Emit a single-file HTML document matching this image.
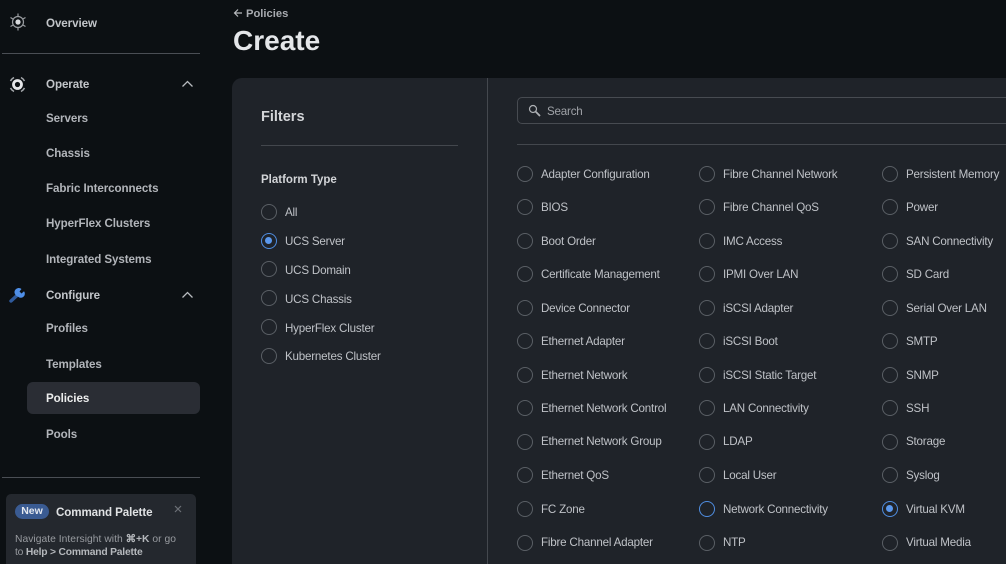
<!DOCTYPE html>
<html lang="en">
<head>
<meta charset="utf-8">
<title>Create Policy</title>
<style>
*{box-sizing:border-box}
html,body{margin:0;padding:0;width:1006px;height:564px;overflow:hidden;background:#0c1013}
#w{position:relative;width:1006px;height:564px;overflow:hidden;background:#0c1013;font-family:"Liberation Sans",sans-serif;color:#c8cbd0}
.t{position:absolute;margin-top:1px;white-space:nowrap;line-height:16px;font-size:11.6px;letter-spacing:-.2px;color:#bfc2c7}
.n{font-weight:700;color:#b2b5ba;font-size:11.6px;letter-spacing:-.08px}
.n.h{color:#c2c5c9}
.r{position:absolute;width:16px;height:16px;border-radius:50%;border:1.5px solid #5a5f65}
.r.on{border-color:#4f8de0}
.r.c:after{content:"";position:absolute;left:3px;top:3px;width:7px;height:7px;border-radius:50%;background:#5b98ec}
.l{position:absolute;height:1px;background:#43474d}
svg{position:absolute}
</style>
</head>
<body>
<div id="w">
<!-- sidebar -->
<svg style="left:8px;top:12px" width="20" height="20" viewBox="0 0 20 20" fill="none" stroke="#9a9da1" stroke-width="1.200"><circle cx="10" cy="10" r="5.500"/><circle cx="10" cy="10" r="2.600" fill="#d8dadd" stroke="none"/><path d="M10 1.500v3M10 15.500v3M2.500 5.500l2.600 1.600M14.900 13l2.600 1.500M2.500 14.500l2.600-1.500M14.900 7l2.600-1.500"/></svg>
<div class="t n" style="left:46px;top:15px;color:#c2c5c9">Overview</div>
<div class="l" style="left:2px;top:53px;width:198px;background:#4a4e54"></div>

<svg style="left:7px;top:74px" width="21" height="21" viewBox="0 0 21 21" fill="none" stroke="#a5a8ac" stroke-width="1.500"><circle cx="10.500" cy="10.500" r="4" stroke="#e6e7e9" stroke-width="2.800"/><path d="M3.500 7A8 8 0 0 1 7 3.500M14 3.500A8 8 0 0 1 17.500 7M17.500 14A8 8 0 0 1 14 17.500M7 17.500A8 8 0 0 1 3.500 14"/></svg>
<div class="t n h" style="left:46px;top:76px">Operate</div>
<svg style="left:181px;top:79px" width="13" height="10" viewBox="0 0 13 10" fill="none" stroke="#b8bbbf" stroke-width="1.300"><path d="M1.500 7.500L6.500 2.500L11.500 7.500"/></svg>
<div class="t n" style="left:46px;top:110px">Servers</div>
<div class="t n" style="left:46px;top:145px">Chassis</div>
<div class="t n" style="left:46px;top:180px">Fabric Interconnects</div>
<div class="t n" style="left:46px;top:215px">HyperFlex Clusters</div>
<div class="t n" style="left:46px;top:251px">Integrated Systems</div>

<svg style="left:9px;top:287px" width="17" height="16" viewBox="0 0 17 16" fill="none"><path d="M2 14L8 8.500" stroke="#2f5a9c" stroke-width="3.400" stroke-linecap="round"/><path d="M7 8.500A4 4 0 0 1 12.500 2L10.500 4.500L12.500 6.500L15 4.300A4 4 0 0 1 9.500 10Z" fill="#4f8fe8"/></svg>
<div class="t n h" style="left:46px;top:287px">Configure</div>
<svg style="left:181px;top:290px" width="13" height="10" viewBox="0 0 13 10" fill="none" stroke="#b8bbbf" stroke-width="1.300"><path d="M1.500 7.500L6.500 2.500L11.500 7.500"/></svg>
<div class="t n" style="left:46px;top:320px">Profiles</div>
<div class="t n" style="left:46px;top:356px">Templates</div>
<div style="position:absolute;left:27px;top:382px;width:173px;height:32px;background:#2a2d34;border-radius:6px"></div>
<div class="t n" style="left:46px;top:390px;color:#eceded">Policies</div>
<div class="t n" style="left:46px;top:426px">Pools</div>
<div class="l" style="left:2px;top:477px;width:198px;background:#4a4e54"></div>

<!-- command palette -->
<div style="position:absolute;left:6px;top:494px;width:190px;height:80px;background:#24282e;border-radius:5px"></div>
<div style="position:absolute;left:15px;top:504px;width:34px;height:15px;background:#3a5b92;border-radius:8px;color:#e4e8ef;font-size:10.500px;font-weight:700;line-height:15px;text-align:center">New</div>
<div class="t" style="left:56px;top:504px;font-size:11.600px;font-weight:700;color:#e0e2e4;letter-spacing:-.1px">Command Palette</div>
<svg style="left:174px;top:505px" width="8" height="8" viewBox="0 0 8 8" stroke="#6c7076" stroke-width="1.200"><path d="M1 1L7 7M7 1L1 7"/></svg>
<div class="t" style="left:15px;top:532px;font-size:10.300px;letter-spacing:.03px;color:#989ba0;line-height:14px">Navigate Intersight with <b style="color:#b5b8bc">⌘+K</b> or go</div>
<div class="t" style="left:15px;top:545px;font-size:10.300px;letter-spacing:-.2px;color:#989ba0;line-height:14px">to <b style="color:#b5b8bc">Help &gt; Command Palette</b></div>

<!-- header -->
<svg style="left:233px;top:8px" width="10" height="10" viewBox="0 0 10 10" fill="none" stroke="#b8bbbf" stroke-width="1.200"><path d="M9 5H1.500M5 1.500L1.500 5L5 8.500"/></svg>
<div class="t" style="left:246px;top:5px;font-size:11.200px;letter-spacing:0;font-weight:700;color:#a8abb0">Policies</div>
<div class="t" style="left:233px;top:24px;font-size:28px;letter-spacing:0;line-height:32px;font-weight:700;color:#e4e6e9">Create</div>

<!-- panel -->
<div style="position:absolute;left:232px;top:78px;width:774px;height:486px;background:#1f2329;border-radius:10px 0 0 0"></div>
<div style="position:absolute;left:487px;top:78px;width:1px;height:486px;background:#44484e"></div>

<div class="t" style="left:261px;top:107px;font-size:14.500px;letter-spacing:0;line-height:18px;font-weight:700;color:#d3d5d8">Filters</div>
<div class="l" style="left:261px;top:145px;width:197px"></div>
<div class="t" style="left:261px;top:171px;font-size:11.500px;letter-spacing:0;font-weight:700;color:#d3d5d8">Platform Type</div>

<span class="r" style="left:261px;top:204px"></span><div class="t" style="left:285px;top:204px">All</div>
<span class="r on c" style="left:261px;top:233px"></span><div class="t" style="left:285px;top:233px">UCS Server</div>
<span class="r" style="left:261px;top:261px"></span><div class="t" style="left:285px;top:262px">UCS Domain</div>
<span class="r" style="left:261px;top:290px"></span><div class="t" style="left:285px;top:291px">UCS Chassis</div>
<span class="r" style="left:261px;top:319px"></span><div class="t" style="left:285px;top:320px">HyperFlex Cluster</div>
<span class="r" style="left:261px;top:348px"></span><div class="t" style="left:285px;top:348px">Kubernetes Cluster</div>

<!-- search -->
<div style="position:absolute;left:517px;top:97px;width:510px;height:27px;border:1px solid #474b51;border-radius:5px"></div>
<svg style="left:528px;top:104px" width="14" height="14" viewBox="0 0 14 14" fill="none" stroke="#aeb1b5" stroke-width="1.200"><circle cx="5" cy="5" r="3.500"/><path d="M7.800 7.800L12 12" stroke-width="1.800"/></svg>
<div class="t" style="left:547px;top:103px;color:#a0a3a8">Search</div>
<div class="l" style="left:517px;top:144px;width:489px"></div>

<!-- column 1 -->
<span class="r" style="left:517px;top:166px"></span><div class="t" style="left:541px;top:166px">Adapter Configuration</div>
<span class="r" style="left:517px;top:199px"></span><div class="t" style="left:541px;top:199px">BIOS</div>
<span class="r" style="left:517px;top:233px"></span><div class="t" style="left:541px;top:233px">Boot Order</div>
<span class="r" style="left:517px;top:266px"></span><div class="t" style="left:541px;top:266px">Certificate Management</div>
<span class="r" style="left:517px;top:300px"></span><div class="t" style="left:541px;top:300px">Device Connector</div>
<span class="r" style="left:517px;top:333px"></span><div class="t" style="left:541px;top:333px">Ethernet Adapter</div>
<span class="r" style="left:517px;top:367px"></span><div class="t" style="left:541px;top:367px">Ethernet Network</div>
<span class="r" style="left:517px;top:400px"></span><div class="t" style="left:541px;top:400px">Ethernet Network Control</div>
<span class="r" style="left:517px;top:434px"></span><div class="t" style="left:541px;top:433px">Ethernet Network Group</div>
<span class="r" style="left:517px;top:467px"></span><div class="t" style="left:541px;top:467px">Ethernet QoS</div>
<span class="r" style="left:517px;top:501px"></span><div class="t" style="left:541px;top:501px">FC Zone</div>
<span class="r" style="left:517px;top:535px"></span><div class="t" style="left:541px;top:534px">Fibre Channel Adapter</div>

<!-- column 2 -->
<span class="r" style="left:699px;top:166px"></span><div class="t" style="left:723px;top:166px">Fibre Channel Network</div>
<span class="r" style="left:699px;top:199px"></span><div class="t" style="left:723px;top:199px">Fibre Channel QoS</div>
<span class="r" style="left:699px;top:233px"></span><div class="t" style="left:723px;top:233px">IMC Access</div>
<span class="r" style="left:699px;top:266px"></span><div class="t" style="left:723px;top:266px">IPMI Over LAN</div>
<span class="r" style="left:699px;top:300px"></span><div class="t" style="left:723px;top:300px">iSCSI Adapter</div>
<span class="r" style="left:699px;top:333px"></span><div class="t" style="left:723px;top:333px">iSCSI Boot</div>
<span class="r" style="left:699px;top:367px"></span><div class="t" style="left:723px;top:367px">iSCSI Static Target</div>
<span class="r" style="left:699px;top:400px"></span><div class="t" style="left:723px;top:400px">LAN Connectivity</div>
<span class="r" style="left:699px;top:434px"></span><div class="t" style="left:723px;top:433px">LDAP</div>
<span class="r" style="left:699px;top:467px"></span><div class="t" style="left:723px;top:467px">Local User</div>
<span class="r on" style="left:699px;top:501px"></span><div class="t" style="left:723px;top:501px">Network Connectivity</div>
<span class="r" style="left:699px;top:535px"></span><div class="t" style="left:723px;top:534px">NTP</div>

<!-- column 3 -->
<span class="r" style="left:882px;top:166px"></span><div class="t" style="left:906px;top:166px">Persistent Memory</div>
<span class="r" style="left:882px;top:199px"></span><div class="t" style="left:906px;top:199px">Power</div>
<span class="r" style="left:882px;top:233px"></span><div class="t" style="left:906px;top:233px">SAN Connectivity</div>
<span class="r" style="left:882px;top:266px"></span><div class="t" style="left:906px;top:266px">SD Card</div>
<span class="r" style="left:882px;top:300px"></span><div class="t" style="left:906px;top:300px">Serial Over LAN</div>
<span class="r" style="left:882px;top:333px"></span><div class="t" style="left:906px;top:333px">SMTP</div>
<span class="r" style="left:882px;top:367px"></span><div class="t" style="left:906px;top:367px">SNMP</div>
<span class="r" style="left:882px;top:400px"></span><div class="t" style="left:906px;top:400px">SSH</div>
<span class="r" style="left:882px;top:434px"></span><div class="t" style="left:906px;top:433px">Storage</div>
<span class="r" style="left:882px;top:467px"></span><div class="t" style="left:906px;top:467px">Syslog</div>
<span class="r on c" style="left:882px;top:501px"></span><div class="t" style="left:906px;top:501px">Virtual KVM</div>
<span class="r" style="left:882px;top:535px"></span><div class="t" style="left:906px;top:534px">Virtual Media</div>
</div>
</body>
</html>
